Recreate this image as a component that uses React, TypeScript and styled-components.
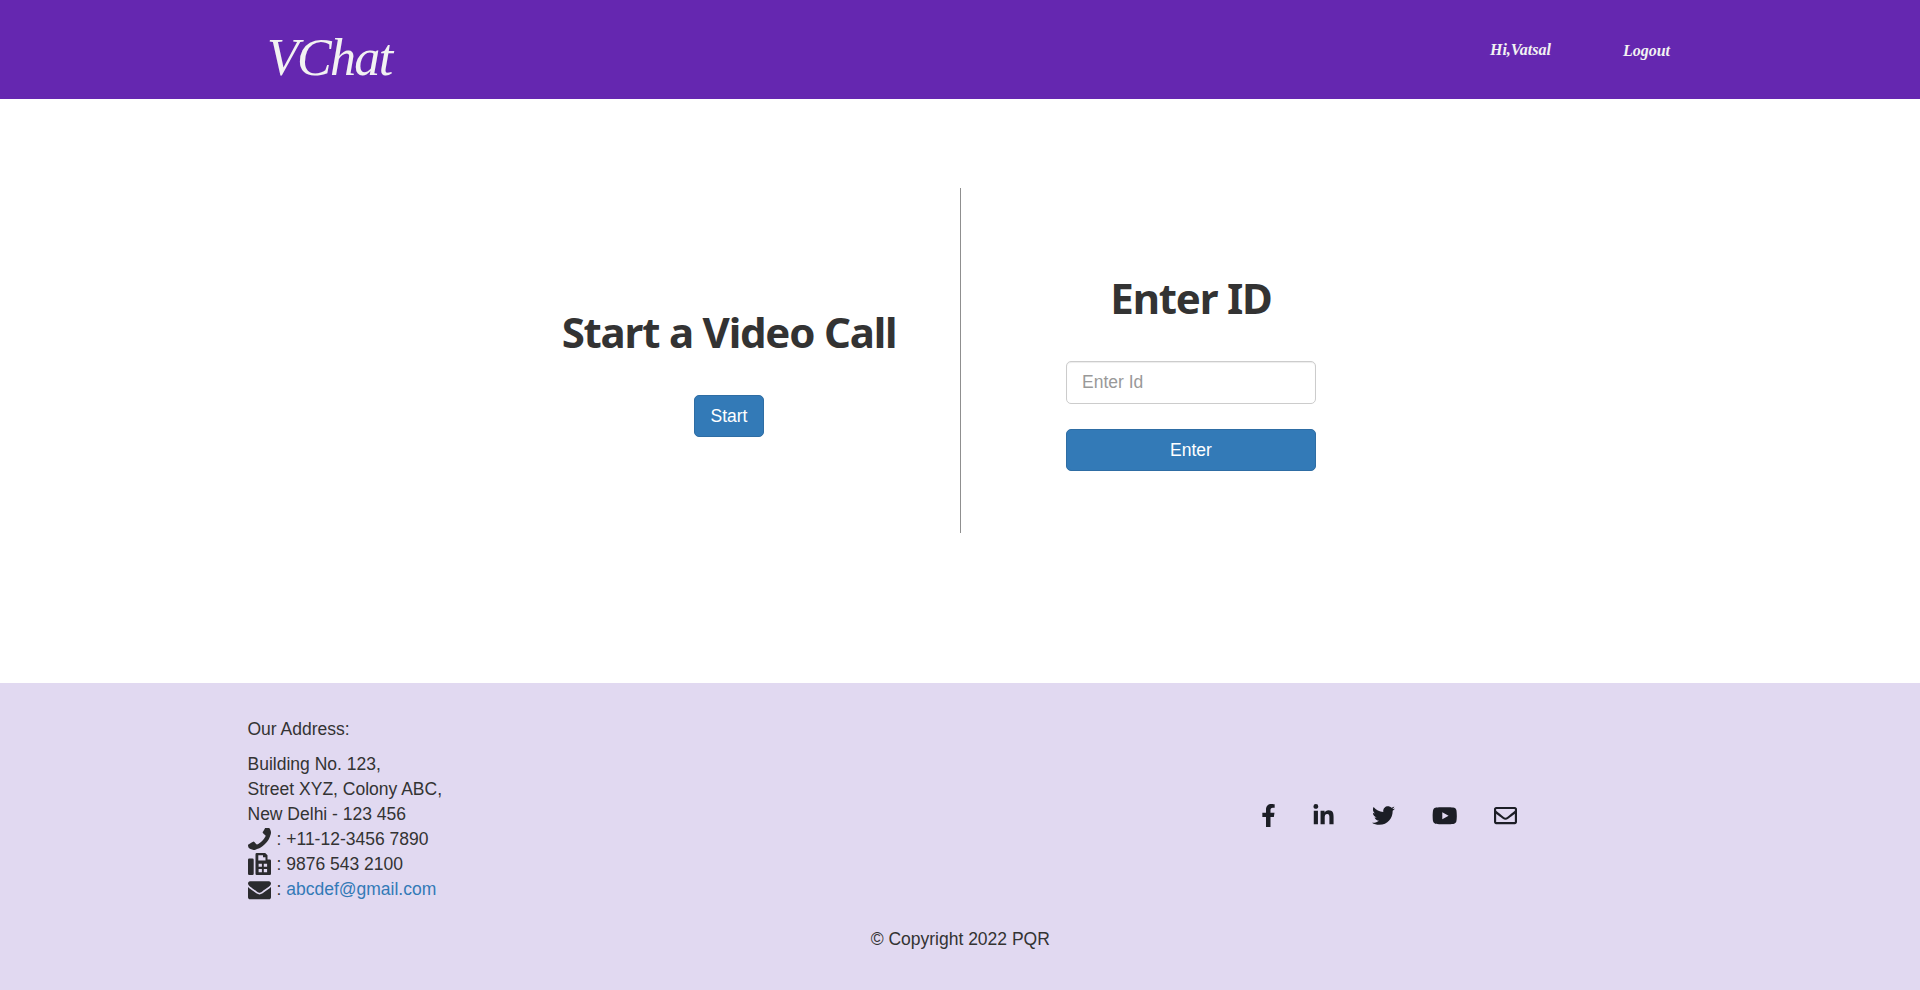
import React from 'react'
import styled, { createGlobalStyle } from 'styled-components'
import { FaFacebookF, FaLinkedinIn, FaTwitter, FaYoutube, FaRegEnvelope } from 'react-icons/fa'

const GlobalStyle = createGlobalStyle`
    html, body {
        margin: 0;
        padding: 0;
        background: #fff;
        color: #333;
        font-family: "Liberation Sans", Arial, sans-serif;
        font-size: 17.5px;
    }
    * {
        box-sizing: border-box;
    }
`

const Page = styled.div`
    display: flex;
    flex-direction: column;
    height: 990px;
`

const NavBar = styled.header`
    height: 99px;
    flex: none;
    background: #6527b0;
    display: flex;
    align-items: center;
    justify-content: space-between;
    padding: 0 250px 0 267px;
`

const Brand = styled.a`
    font-family: "Liberation Serif", serif;
    font-style: italic;
    font-size: 52px;
    color: #f2f2f2;
    letter-spacing: -1.7px;
    margin-top: 16px;
`

const NavLinks = styled.nav`
    display: flex;
    gap: 72px;
    align-items: center;
`

const NavLink = styled.a<{ $shift?: boolean }>`
    font-family: "Liberation Serif", serif;
    font-style: italic;
    font-weight: 700;
    font-size: 16px;
    color: #f2f2f2;
    margin-top: ${(p) => (p.$shift ? '2px' : '0')};
`

const Main = styled.main`
    flex: 1;
    display: flex;
    justify-content: center;
    align-items: flex-start;
    padding-top: 89px;
`

const CallPanel = styled.section`
    width: 460px;
    height: 344px;
    padding-top: 24px;
    display: flex;
    flex-direction: column;
    align-items: center;
    justify-content: center;
`

const Divider = styled.div`
    width: 1px;
    height: 345px;
    background: #8f8f8f;
    margin-left: 1px;
`

const Heading = styled.h2<{ $gap: number }>`
    margin: 0 0 ${(p) => p.$gap}px;
    font-family: "Noto Sans", sans-serif;
    font-weight: 700;
    font-size: 42px;
    letter-spacing: -1.2px;
    line-height: 50px;
    color: #333;
`

const Button = styled.button<{ $wide?: boolean }>`
    width: ${(p) => (p.$wide ? '250px' : '70px')};
    height: 42px;
    padding: 0;
    background: #337ab7;
    border: 1px solid #2e6da4;
    border-radius: 5px;
    color: #fff;
    font-family: "Liberation Sans", sans-serif;
    font-size: 17.5px;
`

const IdInput = styled.input`
    width: 250px;
    height: 43px;
    padding: 0 15px;
    margin-bottom: 25px;
    border: 1px solid #ccc;
    border-radius: 5px;
    outline: none;
    font-family: "Liberation Sans", sans-serif;
    font-size: 17.5px;
    box-shadow: inset 0 1px 1px rgba(0, 0, 0, 0.075);
    &::placeholder {
        color: #999;
    }
`

const Footer = styled.footer`
    height: 307px;
    flex: none;
    background: #e1d9f1;
    padding: 34px 247px 0 247.5px;
    line-height: 25px;
`

const FooterColumns = styled.div`
    display: grid;
    grid-template-columns: 860px 1fr;
    align-items: center;
`

const AddressTitle = styled.div`
    margin-bottom: 10px;
`

const AddressRow = styled.div`
    display: flex;
    align-items: center;
    height: 25px;
    gap: 6px;
    white-space: pre;
`

const ContactIcon = styled.svg<{ $mirror?: boolean }>`
    width: 23px;
    height: 23px;
    flex: none;
    fill: #2b2b2e;
    transform: ${(p) => (p.$mirror ? 'scaleX(-1)' : 'none')};
`

const MailLink = styled.a`
    color: #337ab7;
`

const Socials = styled.div`
    display: flex;
    justify-content: center;
    align-items: center;
    gap: 37px;
    margin-top: 12px;
    padding-right: 7px;
    font-size: 23px;
    color: #1c1e26;
    svg {
        display: block;
    }
`

const FacebookMark = styled(FaFacebookF)`
    margin-right: -5px;
`

const YoutubeMark = styled(FaYoutube)`
    font-size: 25.5px;
`

const Copyright = styled.div`
    margin-top: 25px;
    text-align: center;
`

const PHONE =
    'M1600 1240q0 27-10 70.5t-21 68.5q-21 50-122 106-94 51-186 51-27 0-53-3.5t-57.5-12.5-47-14.5-55.5-20.5-49-18q-98-35-175-83-127-79-264-216t-216-264q-48-77-83-175-3-9-18-49t-20.5-55.5-14.5-47-12.5-57.5-3.5-53q0-92 51-186 56-101 106-122 25-11 68.5-21t70.5-10q14 0 21 3 18 6 53 76 11 19 30 54t35 63.5 31 53.5q3 4 17.5 25t21.5 35.5 7 28.5q0 20-28.5 50t-62 55-62 53-28.5 46q0 9 5 22.5t8.5 20.5 14 24 11.5 19q76 137 174 235t235 174q2 1 19 11.5t24 14 20.5 8.5 22.5 5q18 0 46-28.5t53-62 55-62 50-28.5q14 0 28.5 7t35.5 21.5 25 17.5q25 15 53.5 31t63.5 35 54 30q70 35 76 53 3 7 3 21z'
const FAX =
    'M1.2 5.5h3.3a1.2 1.2 0 0 1 1.2 1.2v14.1a1.2 1.2 0 0 1-1.2 1.2h-3.3a1.2 1.2 0 0 1-1.2-1.2v-14.1a1.2 1.2 0 0 1 1.2-1.2zM8.7 0h8.5l2.3 2.3v4.2h2.3a1.2 1.2 0 0 1 1.2 1.2v13.1a1.2 1.2 0 0 1-1.2 1.2h-13.1a1.2 1.2 0 0 1-1.2-1.2v-19.6a1.2 1.2 0 0 1 1.2-1.2zM10.3 2.2v5.2h7.2v-3.2h-2.5v-2zM10.6 10.8v3h3.3v-3zM15.8 10.8v3h3.3v-3zM10.6 16v3.2h3.3v-3.2zM15.8 16v3.2h3.3v-3.2z'
const ENVELOPE =
    'M1792 710v794q0 66-47 113t-113 47h-1472q-66 0-113-47t-47-113v-794q44 49 101 87 362 246 497 345 57 42 92.5 65.5t94.5 48 110 24.5h2q51 0 110-24.5t94.5-48 92.5-65.5q170-123 498-345 57-39 100-87zm0-294q0 79-49 151t-122 123q-376 261-468 325-10 7-42.5 30.5t-54 38-52 32.5-57.5 27-50 9h-2q-23 0-50-9t-57.5-27-52-32.5-54-38-42.5-30.5q-91-64-262-182.5t-205-142.5q-62-42-117-115.5t-55-136.5q0-78 41.5-130t118.5-52h1472q65 0 112.5 47t47.5 113z'

const App = () => {
    return (
        <Page>
            <GlobalStyle />
            <NavBar>
                <Brand>VChat</Brand>
                <NavLinks>
                    <NavLink>Hi,Vatsal</NavLink>
                    <NavLink $shift>Logout</NavLink>
                </NavLinks>
            </NavBar>
            <Main>
                <CallPanel>
                    <Heading $gap={38}>Start a Video Call</Heading>
                    <Button>Start</Button>
                </CallPanel>
                <Divider />
                <CallPanel>
                    <Heading $gap={38}>Enter ID</Heading>
                    <IdInput placeholder="Enter Id" />
                    <Button $wide>Enter</Button>
                </CallPanel>
            </Main>
            <Footer>
                <FooterColumns>
                    <div>
                        <AddressTitle>Our Address:</AddressTitle>
                        <AddressRow>Building No. 123,</AddressRow>
                        <AddressRow>Street XYZ, Colony ABC,</AddressRow>
                        <AddressRow>New Delhi - 123 456</AddressRow>
                        <AddressRow>
                            <ContactIcon $mirror viewBox="192 192 1408 1408">
                                <path d={PHONE} />
                            </ContactIcon>
                            <span>: +11-12-3456 7890</span>
                        </AddressRow>
                        <AddressRow>
                            <ContactIcon viewBox="0 0 23 23">
                                <path fillRule="evenodd" d={FAX} />
                            </ContactIcon>
                            <span>: 9876 543 2100</span>
                        </AddressRow>
                        <AddressRow>
                            <ContactIcon viewBox="0 0 1792 1792">
                                <path d={ENVELOPE} />
                            </ContactIcon>
                            <span>
                                : <MailLink>abcdef@gmail.com</MailLink>
                            </span>
                        </AddressRow>
                    </div>
                    <Socials>
                        <FacebookMark />
                        <FaLinkedinIn />
                        <FaTwitter />
                        <YoutubeMark />
                        <FaRegEnvelope />
                    </Socials>
                </FooterColumns>
                <Copyright>© Copyright 2022 PQR</Copyright>
            </Footer>
        </Page>
    )
}

export default App
